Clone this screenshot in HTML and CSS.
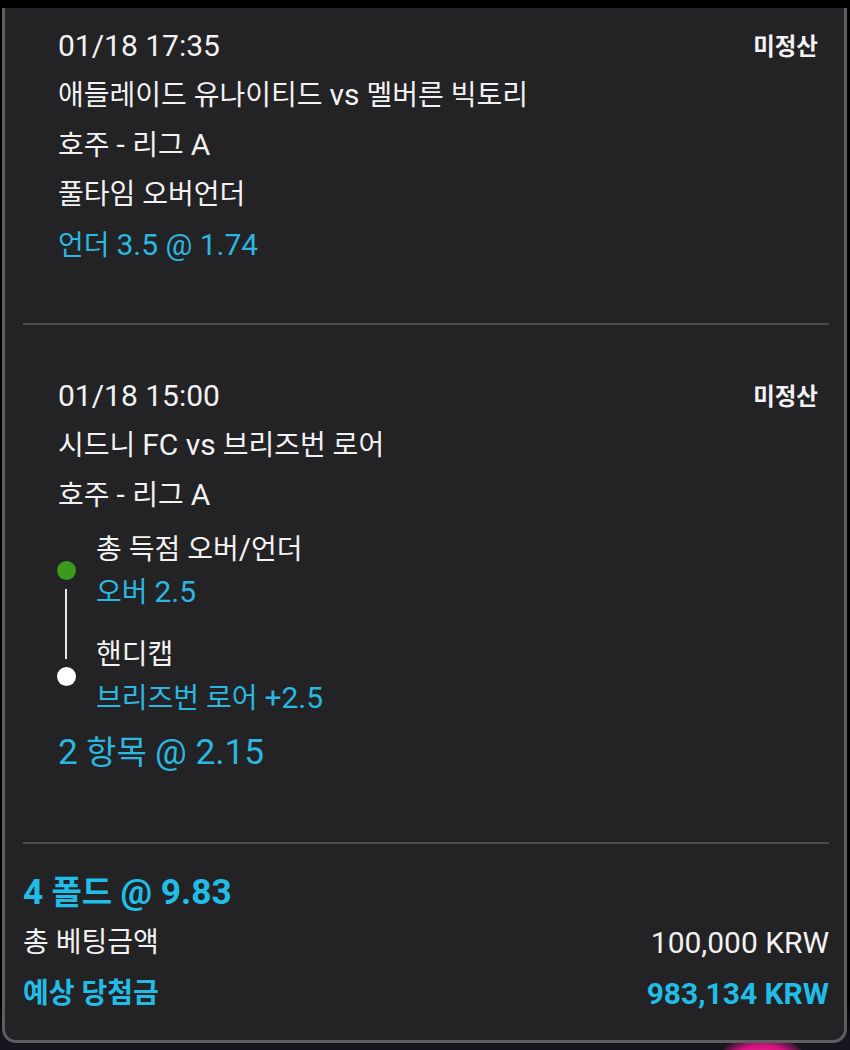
FILE: index.html
```html
<!DOCTYPE html>
<html lang="ko">
<head>
<meta charset="utf-8">
<link rel="stylesheet" href="styles.css">
</head>
<body>
<div class="screen">
  <div class="card">
    <section class="bet">
      <div class="row">
        <span class="date">01/18 17:35</span>
        <span class="status">미정산</span>
      </div>
      <div class="line">애들레이드 유나이티드 <span class="l">vs</span> 멜버른 빅토리</div>
      <div class="line">호주 <span class="l">- </span>리그 <span class="l">A</span></div>
      <div class="line">풀타임 오버언더</div>
      <div class="line pick">언더 <span class="l">3.5 @ 1.74</span></div>
    </section>
    <hr class="divider">
    <section class="bet bet2">
      <div class="row">
        <span class="date">01/18 15:00</span>
        <span class="status">미정산</span>
      </div>
      <div class="line">시드니 <span class="l">FC vs</span> 브리즈번 로어</div>
      <div class="line">호주 <span class="l">- </span>리그 <span class="l">A</span></div>
      <div class="legs">
        <div class="leg leg-first">
          <div class="leg-title">총 득점 오버<span class="l">/</span>언더</div>
          <div class="leg-pick">오버 <span class="l">2.5</span></div>
        </div>
        <div class="leg leg-last">
          <div class="leg-title">핸디캡</div>
          <div class="leg-pick">브리즈번 로어 <span class="l">+2.5</span></div>
        </div>
      </div>
      <div class="combo"><span class="l">2</span> 항목 <span class="l">@ 2.15</span></div>
    </section>
    <hr class="divider">
    <section class="summary">
      <div class="fold"><span class="l">4</span> 폴드 <span class="l">@ 9.83</span></div>
      <div class="sum-row">
        <span>총 베팅금액</span>
        <span class="l">100,000 KRW</span>
      </div>
      <div class="sum-row win">
        <span>예상 당첨금</span>
        <span class="l">983,134 KRW</span>
      </div>
    </section>
  </div>
  <div class="glow"></div>
</div>
</body>
</html>
```

FILE: styles.css
```css
* { box-sizing: border-box; }
html, body {
  margin: 0;
  padding: 0;
  background: #000;
}
body {
  font-family: "Roboto", "Noto Sans CJK KR", sans-serif;
  color: #f2f2f2;
}
.screen {
  position: relative;
  width: 850px;
  height: 1050px;
  overflow: hidden;
  background: linear-gradient(#000 0, #000 1000px, #17151e 1040px, #17151e 100%);
  padding-top: 8px;
}
.l { font-size: 1.07em; }
.card {
  position: relative;
  z-index: 1;
  margin-left: 2px;
  width: 845px;
  height: 1035px;
  background: #232225;
  border: 3px solid #5e5d60;
  border-top: none;
  border-radius: 0 0 14px 14px;
}
.bet {
  padding: 12px 26px 53px 53px;
  font-size: 28px;
}
.bet2 { padding-top: 45px; padding-bottom: 65px; }
.row {
  display: flex;
  justify-content: space-between;
  align-items: center;
  height: 50px;
}
.date { font-size: 30px; }
.status { font-size: 23.5px; font-weight: 700; }
.line {
  height: 50px;
  line-height: 50px;
  white-space: nowrap;
}
.pick { color: #2bb7e0; }
.divider {
  margin: 0 15px 0 18px;
  border: none;
  height: 2px;
  background: #4c4b4f;
}
.legs {
  display: flex;
  flex-direction: column;
  gap: 20px;
  padding-top: 7px;
  padding-left: 38px;
}
.leg { position: relative; }
.leg-title, .leg-pick {
  height: 43px;
  line-height: 43px;
  white-space: nowrap;
}
.leg-pick { color: #2bb7e0; }
.leg::before {
  content: "";
  position: absolute;
  left: -39px;
  top: 34px;
  width: 19px;
  height: 19px;
  border-radius: 50%;
  background: #fff;
}
.leg-first::before { background: #3b9a1c; }
.leg-first::after {
  content: "";
  position: absolute;
  left: -31px;
  top: 62px;
  width: 2px;
  height: 70px;
  background: #e8e8e8;
}
.combo {
  margin-top: 8px;
  height: 50px;
  line-height: 50px;
  font-size: 33px;
  color: #2bb7e0;
}
.summary {
  padding: 23px 15px 0 18px;
  font-size: 28px;
}
.fold {
  height: 50px;
  line-height: 50px;
  font-size: 33px;
  font-weight: 700;
  color: #21bde6;
}
.sum-row {
  display: flex;
  justify-content: space-between;
  height: 51px;
  line-height: 51px;
}
.win {
  color: #21bde6;
  font-weight: 700;
}
.glow {
  position: absolute;
  left: 718px;
  top: 1036px;
  width: 88px;
  height: 50px;
  border-radius: 50%;
  background: radial-gradient(ellipse at center, #ff2aa0 0, #d1137e 45%, rgba(120,10,70,0) 75%);
}
```
